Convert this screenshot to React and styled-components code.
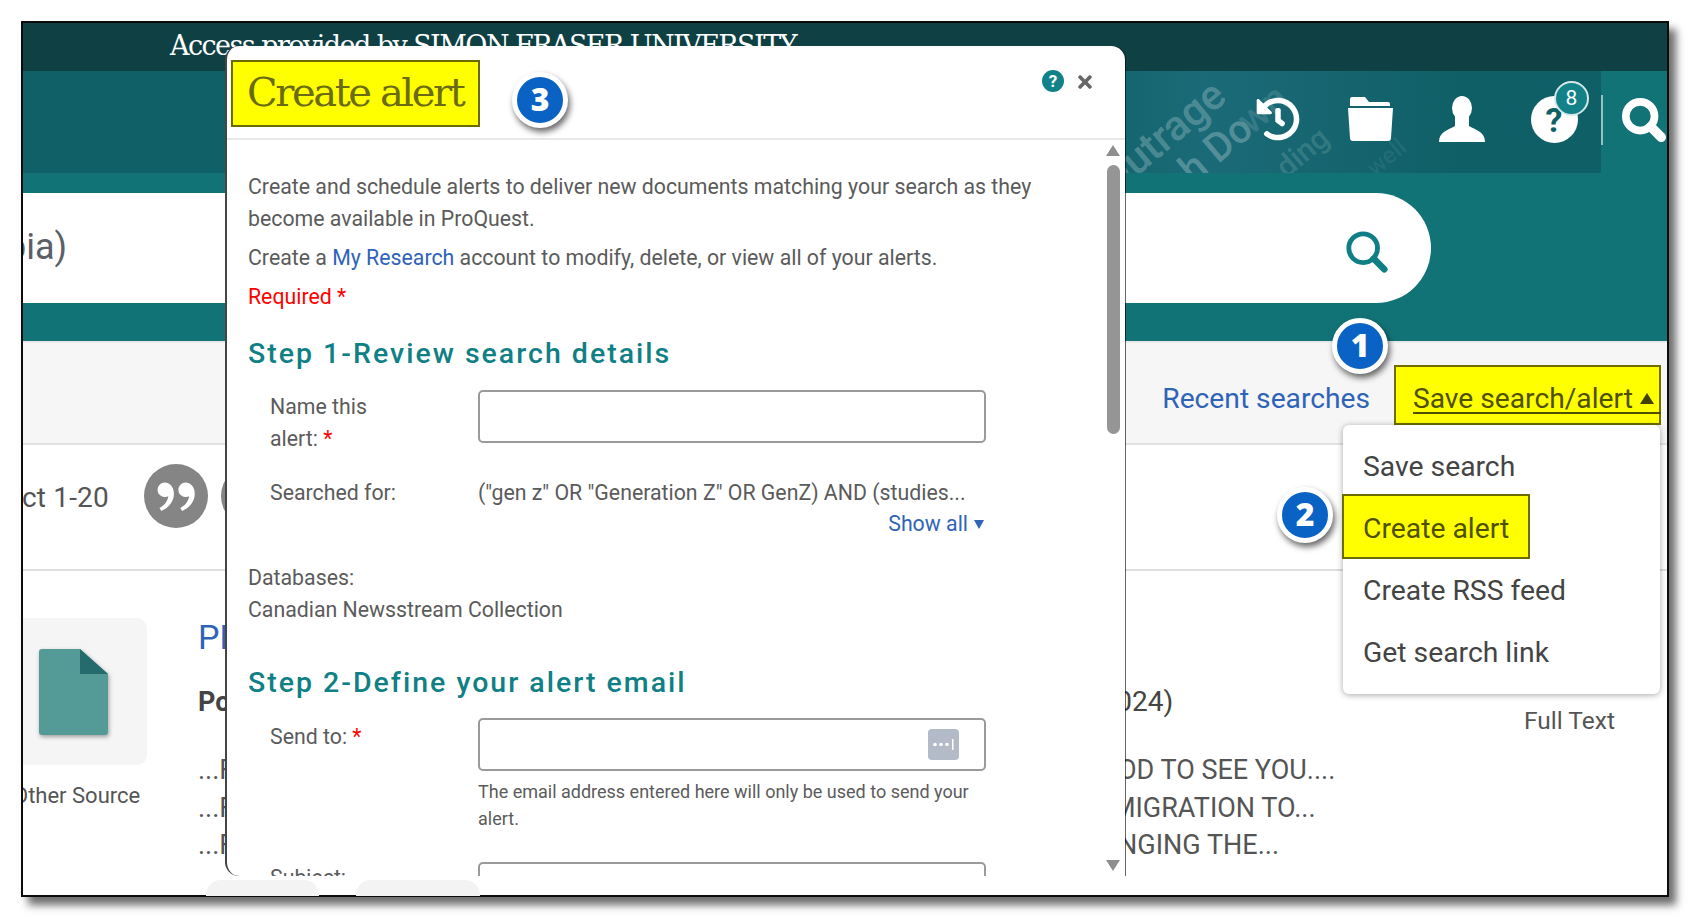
import styled, { createGlobalStyle } from 'styled-components';
import { FaHistory, FaTimes } from 'react-icons/fa';
import { RiDoubleQuotesR } from 'react-icons/ri';

const GlobalStyle = createGlobalStyle`
  html, body { margin: 0; padding: 0; background: #fff; overflow: hidden; }
  body { font-family: Roboto, "Liberation Sans", sans-serif; color: #555; }
  * { box-sizing: border-box; }
`;

const Page = styled.div`
  width: 1690px;
  height: 918px;
  padding: 21px 21px 21px 21px;
`;

const Frame = styled.div`
  position: relative;
  width: 100%;
  height: 100%;
  border: 2px solid #0c0c0c;
  background: #fff;
  box-shadow: 7px 8px 8px rgba(60, 60, 60, 0.75);
`;

const Clip = styled.div`
  height: 100%;
  overflow: hidden;
`;

const AccessBar = styled.div`
  height: 48px;
  background: #0f4144;
  color: #fff;
  font-family: "DejaVu Serif", serif;
  font-size: 27px;
  line-height: 45px;
  padding-left: 147px;
  letter-spacing: -1.55px;
  white-space: nowrap;
  overflow: hidden;
`;

const Header = styled.div`
  position: relative;
  height: 102px;
  display: flex;
  justify-content: flex-end;
  background: linear-gradient(90deg, #0f6167 0%, #0f6167 62%, #1b6a78 72%, #0f5f66 88%);
  overflow: hidden;
`;

const Watermark = styled.span`
  position: absolute;
  left: ${(p) => p.$x}px;
  top: ${(p) => p.$y}px;
  font-size: ${(p) => p.$size}px;
  font-weight: 500;
  line-height: 50px;
  color: rgba(255, 255, 255, ${(p) => p.$alpha});
  transform: rotate(-40deg);
  transform-origin: 0 50%;
  white-space: nowrap;
`;

const HeaderIcons = styled.div`
  position: relative;
  display: flex;
  align-items: center;
  height: 100%;
  padding: 0 1px 6px 0;
  color: #fff;
`;

const HeaderIcon = styled.div`
  position: relative;
  width: 92px;
  display: flex;
  justify-content: center;
`;

const HelpCircle = styled.span`
  width: 47px;
  height: 47px;
  border-radius: 50%;
  background: #fff;
  color: #0f6167;
  font-size: 34px;
  font-weight: 700;
  line-height: 49px;
  text-align: center;
`;

const CountBadge = styled.span`
  position: absolute;
  top: -15px;
  right: 11px;
  width: 35px;
  height: 35px;
  border-radius: 50%;
  background: #128288;
  border: 2px solid #d5e8e8;
  color: #fff;
  font-size: 21px;
  line-height: 30px;
  text-align: center;
`;

const SearchTab = styled.div`
  position: relative;
  width: 66px;
  flex: none;
  background: #127377;
  display: flex;
  align-items: center;
  padding: 0 0 4px 20px;
  color: #fff;

  &::before {
    content: '';
    position: absolute;
    left: 0;
    top: 24px;
    height: 50px;
    width: 2px;
    background: rgba(255, 255, 255, 0.55);
  }
`;

const SearchBand = styled.div`
  height: 168px;
  padding: 20px 0 38px;
  background: #127377;
`;

const SearchPill = styled.div`
  width: 1408px;
  height: 110px;
  background: #fff;
  border-radius: 0 56px 56px 0;
  display: flex;
  align-items: center;
  justify-content: space-between;
  padding: 8px 41px 0 0;
  color: #0f7e85;
`;

const QueryText = styled.span`
  font-size: 36px;
  color: #5a5f68;
  margin-left: -17px;
  margin-top: -10px;
`;

const Toolbar = styled.div`
  height: 104px;
  background: #f6f6f6;
  border-bottom: 2px solid #e2e2e2;
  display: flex;
  justify-content: flex-end;
  align-items: flex-start;
  padding: 22px 6px 0 0;
  border-top: 2px solid #e9e9e9;
`;

const ToolLink = styled.a`
  font-size: 28.2px;
  line-height: 33px;
  padding-top: 17px;
  margin-right: 24px;
  color: #2f63b8;
`;

const SaveToggle = styled.a`
  width: 267px;
  height: 60px;
  background: #ffff00;
  border: 2px solid #6f6f00;
  color: #4e5000;
  font-size: 28.2px;
  line-height: 33px;
  padding: 15px 0 0 17px;
  display: flex;
  white-space: nowrap;
  position: relative;

  &::after {
    content: '';
    position: absolute;
    left: 17px;
    right: -2px;
    bottom: 9px;
    height: 2px;
    background: #4e5000;
  }
`;

const Caret = styled.i`
  margin: 11px 0 0 7px;
  width: 0;
  height: 0;
  border-left: 7px solid transparent;
  border-right: 7px solid transparent;
  border-bottom: 11px solid #3f4200;
`;

const CiteRow = styled.div`
  height: 126px;
  border-bottom: 2px solid #dedede;
  display: flex;
  align-items: flex-start;
  padding-top: 19px;
`;

const SelectText = styled.span`
  display: flex;
  justify-content: flex-end;
  width: 86px;
  margin-right: 35px;
  font-size: 28px;
  line-height: 68px;
  color: #555;
  white-space: nowrap;
  letter-spacing: 0.2px;
`;

const RoundTool = styled.div`
  width: 64px;
  height: 64px;
  flex: none;
  border-radius: 50%;
  background: #858585;
  color: #fff;
  display: flex;
  align-items: center;
  justify-content: center;
  margin-right: 13px;
`;

const Results = styled.div`
  display: flex;
  padding-top: 47px;
`;

const ThumbCol = styled.div`
  width: 185px;
  flex: none;
  margin-left: -10px;
`;

const Thumb = styled.div`
  width: 134px;
  height: 147px;
  background: #f5f5f5;
  border-radius: 0 10px 10px 0;
  display: flex;
  align-items: center;
  justify-content: center;
  padding-right: 14px;
`;

const ThumbLabel = styled.div`
  margin-top: 17px;
  width: 125px;
  font-size: 22px;
  line-height: 28px;
  white-space: nowrap;
  text-align: right;
  color: #555;
`;

const ResultBody = styled.div`
  display: grid;
  grid-template-columns: 883px 443px 150px;
  grid-auto-rows: min-content;
  white-space: nowrap;
`;

const ResultTitle = styled.a`
  grid-column: 1 / 4;
  font-size: 34px;
  line-height: 40px;
  color: #2f63b8;
  margin-bottom: 29px;
  margin-top: -1px;
`;

const Source = styled.span`
  font-size: 27px;
  line-height: 32px;
  font-weight: 700;
  color: #444;
`;

const PubDate = styled.span`
  font-size: 28px;
  line-height: 32px;
  color: #444;
  padding-left: 10px;
`;

const FullText = styled.span`
  font-size: 24.5px;
  line-height: 32px;
  color: #555;
  padding-top: 19px;
`;

const Snippet = styled.span`
  font-size: 27px;
  line-height: 37.5px;
  color: #555;
`;

const SnippetHead = styled(Snippet)`
  grid-column: 1;
`;

const SnippetTail = styled(Snippet)`
  grid-column: 2;
`;

const SpacerRow = styled.div`
  grid-column: 1 / 4;
  height: 15px;
`;

const Tabs = styled.div`
  position: absolute;
  left: 183px;
  bottom: -1px;
  height: 16px;
  display: flex;
  gap: 37px;
  overflow: hidden;
`;

const TabPill = styled.span`
  height: 30px;
  width: ${(p) => p.$w}px;
  border-radius: 28px;
  background: #f3f3f3;
`;

const Modal = styled.div`
  position: absolute;
  left: 202px;
  top: 23px;
  width: 900px;
  height: 830px;
  background: #fff;
  border-left: 2px solid #444;
  border-radius: 14px 14px 0 14px;
  box-shadow: 1px 0 0 rgba(0, 0, 0, 0.6);
  display: flex;
  flex-direction: column;
  overflow: hidden;
`;

const ModalHead = styled.div`
  height: 94px;
  flex: none;
  border-bottom: 2px solid #e8e8e8;
  display: flex;
  justify-content: space-between;
  padding: 14px 30px 0 4px;
`;

const ModalTitle = styled.h1`
  margin: 0;
  width: 249px;
  height: 67px;
  background: #ffff00;
  border: 2px solid #6b6b00;
  color: #6a6b12;
  font-family: "DejaVu Serif", serif;
  font-weight: 400;
  font-size: 40px;
  letter-spacing: -2.4px;
  line-height: 60px;
  padding-left: 14px;
  white-space: nowrap;
`;

const HeadActions = styled.div`
  display: flex;
  align-items: flex-start;
  gap: 11px;
  padding-top: 10px;
`;

const HelpDot = styled.span`
  width: 22px;
  height: 22px;
  border-radius: 50%;
  background: #128288;
  color: #fff;
  font-size: 17px;
  font-weight: 700;
  line-height: 22px;
  text-align: center;
`;

const CloseBtn = styled.span`
  display: flex;
  height: 24px;
  align-items: center;
  color: #666;
`;

const ModalBody = styled.div`
  position: relative;
  flex: 1;
  overflow: hidden;
  padding: 31px 0 0 21px;
  font-size: 21.3px;
  line-height: 32px;
  color: #5b5b5b;
`;

const Para = styled.p`
  margin: 0 0 7px;
  width: 800px;
`;

const BlueLink = styled.a`
  color: #2f63b8;
`;

const Required = styled.p`
  margin: 0;
  color: #ff0000;
`;

const Star = styled.span`
  color: #ff0000;
`;

const StepTitle = styled.h2`
  margin: ${(p) => p.$top}px 0 0;
  font-size: 28.5px;
  line-height: 36px;
  font-weight: 500;
  letter-spacing: 2px;
  color: #0f8085;
`;

const Field = styled.div`
  display: grid;
  grid-template-columns: 208px 508px;
  padding-left: 22px;
  margin-top: ${(p) => p.$top}px;
`;

const FieldLabel = styled.label`
  width: 130px;
  padding-top: ${(p) => p.$pad || 0}px;
`;

const FieldInput = styled.div`
  height: 53px;
  border: 2px solid #9a9a9a;
  border-radius: 5px;
  display: flex;
  align-items: center;
  justify-content: flex-end;
  padding-right: 25px;
`;

const SearchValue = styled.div`
  white-space: nowrap;
`;

const ShowAll = styled.a`
  display: flex;
  justify-content: flex-end;
  align-items: center;
  gap: 6px;
  padding-right: 2px;
  color: #2f63b8;
  margin-top: -1px;
`;

const ShowCaret = styled.i`
  width: 0;
  height: 0;
  border-left: 5px solid transparent;
  border-right: 5px solid transparent;
  border-top: 9px solid #2f63b8;
`;

const HelpText = styled.p`
  margin: 7px 0 0;
  font-size: 18px;
  line-height: 27px;
`;

const DbBlock = styled.div`
  margin-top: 22px;
`;

const Scrollbar = styled.div`
  position: absolute;
  right: 5px;
  top: 5px;
  bottom: 5px;
  width: 14px;
  display: flex;
  flex-direction: column;
  align-items: center;
`;

const ScrollThumb = styled.div`
  width: 13px;
  height: 269px;
  margin-top: 9px;
  border-radius: 7px;
  background: #959595;
`;

const ScrollArrow = styled.i`
  width: 0;
  height: 0;
  border-left: 7px solid transparent;
  border-right: 7px solid transparent;
  ${(p) => (p.$down ? 'border-top: 11px solid #8f8f8f; margin-top: auto;' : 'border-bottom: 11px solid #8f8f8f;')}
`;

const Dropdown = styled.div`
  position: absolute;
  right: 7px;
  top: 402px;
  width: 317px;
  height: 269px;
  background: #fff;
  border-radius: 6px;
  box-shadow: 0 1px 6px rgba(0, 0, 0, 0.35);
  padding-top: 11px;
`;

const MenuItem = styled.div`
  font-size: 28.3px;
  height: 62px;
  line-height: 62px;
  padding-left: 20px;
  color: #444;
  white-space: nowrap;
`;

const MenuItemActive = styled(MenuItem)`
  width: 188px;
  height: 65px;
  margin: -4px 0 1px -1px;
  background: #ffff00;
  border: 2px solid #6b6b00;
  line-height: 66px;
  padding-left: 19px;
  color: #4e5000;
`;

const Step = styled.div`
  position: absolute;
  left: ${(p) => p.$x}px;
  top: ${(p) => p.$y}px;
  width: 56px;
  height: 56px;
  border-radius: 50%;
  background: #0a62c4;
  border: 5px solid #fff;
  box-shadow: 2px 4px 6px rgba(0, 0, 0, 0.6);
  color: #fff;
  font-family: "Open Sans", sans-serif;
  font-weight: 800;
  font-size: 32px;
  line-height: 44px;
  text-align: center;
`;

function SearchGlyph({ size, stroke }) {
  return (
    <svg width={size} height={size} viewBox="0 0 48 48" fill="none" stroke="currentColor" strokeLinecap="round">
      <circle cx="20" cy="20" r="15" strokeWidth={stroke} />
      <path d="M31 31 L42 42" strokeWidth={stroke + 2} />
    </svg>
  );
}

function FolderGlyph() {
  return (
    <svg width="47" height="44" viewBox="0 0 47 44" fill="#fff">
      <path d="M5 0 H18 L22 5 H41 a2 2 0 0 1 2 2 V9 H3 V2 a2 2 0 0 1 2 -2 Z" />
      <path d="M1 11 H46 L44 41 a3 3 0 0 1 -3 3 H6 a3 3 0 0 1 -3 -3 Z" />
    </svg>
  );
}

function UserGlyph() {
  return (
    <svg width="48" height="46" viewBox="0 0 48 46" fill="#fff">
      <ellipse cx="24" cy="12" rx="10" ry="12" />
      <path d="M1 46 C1 36 10 34 17 30 V20 H31 V30 C38 34 47 36 47 46 Z" />
    </svg>
  );
}

function DocIcon() {
  return (
    <svg width="69" height="86" viewBox="0 0 69 86" style={{ filter: 'drop-shadow(1px 2px 2px rgba(0,0,0,.35))' }}>
      <path d="M3 0 H41 L69 25 V83 a3 3 0 0 1 -3 3 H3 a3 3 0 0 1 -3 -3 V3 a3 3 0 0 1 3 -3 Z" fill="#549b97" />
      <path d="M41 0 L69 25 H41 Z" fill="#256b6d" />
    </svg>
  );
}

function DotsIcon() {
  return (
    <svg width="31" height="31" viewBox="0 0 31 31">
      <rect width="31" height="31" rx="4" fill="#b3bbc9" />
      <circle cx="7" cy="15.5" r="1.8" fill="#fff" />
      <circle cx="13" cy="15.5" r="1.8" fill="#fff" />
      <circle cx="19" cy="15.5" r="1.8" fill="#fff" />
      <rect x="24" y="10" width="1.5" height="11" fill="#fff" />
    </svg>
  );
}

export default function App() {
  return (
    <Page>
      <GlobalStyle />
      <Frame>
        <Clip>
          <AccessBar>Access provided by SIMON FRASER UNIVERSITY</AccessBar>
          <Header>
            <Watermark $x={1082} $y={89} $size={42} $alpha={0.24}>Outrage</Watermark>
            <Watermark $x={1162} $y={79} $size={40} $alpha={0.26}>h Do</Watermark>
            <Watermark $x={1220} $y={30} $size={40} $alpha={0.12}>wn</Watermark>
            <Watermark $x={1257} $y={75} $size={30} $alpha={0.14}>ding</Watermark>
            <Watermark $x={1347} $y={75} $size={24} $alpha={0.07}>well</Watermark>
            <HeaderIcons>
              <HeaderIcon><FaHistory size={44} /></HeaderIcon>
              <HeaderIcon><FolderGlyph /></HeaderIcon>
              <HeaderIcon><UserGlyph /></HeaderIcon>
              <HeaderIcon>
                <HelpCircle>?</HelpCircle>
                <CountBadge>8</CountBadge>
              </HeaderIcon>
            </HeaderIcons>
            <SearchTab><SearchGlyph size={48} stroke={8} /></SearchTab>
          </Header>
          <SearchBand>
            <SearchPill>
              <QueryText>pia)</QueryText>
              <SearchGlyph size={46} stroke={5} />
            </SearchPill>
          </SearchBand>
          <Toolbar>
            <ToolLink>Recent searches</ToolLink>
            <SaveToggle>Save search/alert<Caret /></SaveToggle>
          </Toolbar>
          <CiteRow>
            <SelectText>Select 1-20</SelectText>
            <RoundTool><RiDoubleQuotesR size={50} /></RoundTool>
            <RoundTool />
          </CiteRow>
          <Results>
            <ThumbCol>
              <Thumb><DocIcon /></Thumb>
              <ThumbLabel>Other Source</ThumbLabel>
            </ThumbCol>
            <ResultBody>
              <ResultTitle>PLEASE</ResultTitle>
              <Source>Post</Source>
              <PubDate>(2024)</PubDate>
              <FullText>Full Text</FullText>
              <SpacerRow />
              <SnippetHead>...F</SnippetHead>
              <SnippetTail>GOOD TO SEE YOU....</SnippetTail>
              <SnippetHead>...F</SnippetHead>
              <SnippetTail>IMMIGRATION TO...</SnippetTail>
              <SnippetHead>...F</SnippetHead>
              <SnippetTail>HANGING THE...</SnippetTail>
            </ResultBody>
          </Results>
          <Tabs>
            <TabPill $w={113} />
            <TabPill $w={124} />
          </Tabs>
        </Clip>

        <Dropdown>
          <MenuItem>Save search</MenuItem>
          <MenuItemActive>Create alert</MenuItemActive>
          <MenuItem>Create RSS feed</MenuItem>
          <MenuItem>Get search link</MenuItem>
        </Dropdown>

        <Modal>
          <ModalHead>
            <ModalTitle>Create alert</ModalTitle>
            <HeadActions>
              <HelpDot>?</HelpDot>
              <CloseBtn><FaTimes size={20} /></CloseBtn>
            </HeadActions>
          </ModalHead>
          <ModalBody>
            <Para>Create and schedule alerts to deliver new documents matching your search as they become available in ProQuest.</Para>
            <Para>Create a <BlueLink>My Research</BlueLink> account to modify, delete, or view all of your alerts.</Para>
            <Required>Required *</Required>
            <StepTitle $top={23}>Step 1-Review search details</StepTitle>
            <Field $top={18}>
              <FieldLabel $pad={1}>Name this alert: <Star>*</Star></FieldLabel>
              <FieldInput />
            </Field>
            <Field $top={22}>
              <FieldLabel>Searched for:</FieldLabel>
              <div>
                <SearchValue>("gen z" OR "Generation Z" OR GenZ) AND (studies...</SearchValue>
                <ShowAll>Show all <ShowCaret /></ShowAll>
              </div>
            </Field>
            <DbBlock>
              <div>Databases:</div>
              <div>Canadian Newsstream Collection</div>
            </DbBlock>
            <StepTitle $top={39}>Step 2-Define your alert email</StepTitle>
            <Field $top={17}>
              <FieldLabel $pad={3}>Send to: <Star>*</Star></FieldLabel>
              <div>
                <FieldInput><DotsIcon /></FieldInput>
                <HelpText>The email address entered here will only be used to send your alert.</HelpText>
              </div>
            </Field>
            <Field $top={30}>
              <FieldLabel>Subject:</FieldLabel>
              <FieldInput />
            </Field>
            <Scrollbar>
              <ScrollArrow />
              <ScrollThumb />
              <ScrollArrow $down />
            </Scrollbar>
          </ModalBody>
        </Modal>

        <Step $x={1309} $y={295}>1</Step>
        <Step $x={1254} $y={464}>2</Step>
        <Step $x={489} $y={49}>3</Step>
      </Frame>
    </Page>
  );
}
